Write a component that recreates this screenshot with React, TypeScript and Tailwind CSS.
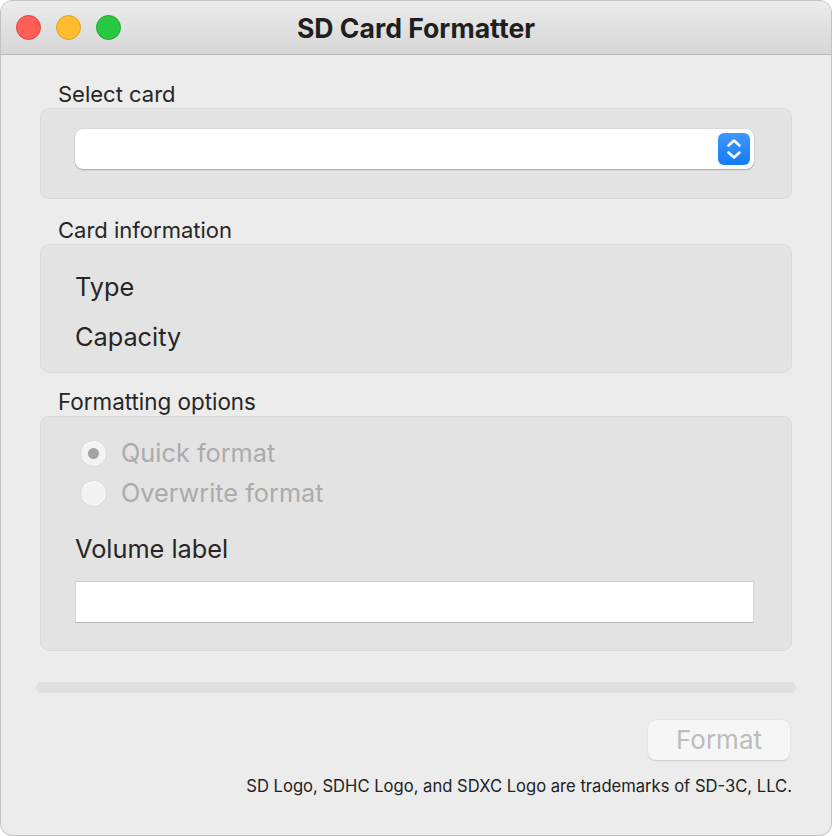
import { useState } from "react";

const font = { fontFamily: "Inter, 'Liberation Sans', sans-serif" };

function TrafficLights() {
  return (
    <div className="flex items-center gap-[15px] pl-[15px]">
      <span className="h-[25px] w-[25px] rounded-full border border-[#e0443e] bg-[#ff5f57]" />
      <span className="h-[25px] w-[25px] rounded-full border border-[#dea123] bg-[#febc2e]" />
      <span className="h-[25px] w-[25px] rounded-full border border-[#1aab29] bg-[#28c840]" />
    </div>
  );
}

function Stepper() {
  return (
    <div className="flex h-[32px] w-[32px] items-center justify-center rounded-[6px] bg-gradient-to-b from-[#3d97ff] to-[#137bf6]">
      <svg width="18" height="24" viewBox="0 0 18 24" fill="none">
        <path d="M3.5 8.5 L9 3.5 L14.5 8.5" stroke="white" strokeWidth="2.6" strokeLinecap="round" strokeLinejoin="round" />
        <path d="M3.5 15.5 L9 20.5 L14.5 15.5" stroke="white" strokeWidth="2.6" strokeLinecap="round" strokeLinejoin="round" />
      </svg>
    </div>
  );
}

function Radio({ checked, label }: { checked?: boolean; label: string }) {
  return (
    <div className="flex h-[40px] items-center">
      <span className="flex h-[27px] w-[27px] items-center justify-center rounded-full border border-[#d9d9d9] bg-[#f3f3f3] shadow-[inset_0_1px_1px_rgba(255,255,255,0.8)]">
        {checked && <span className="h-[11px] w-[11px] rounded-full bg-[#a3a3a3]" />}
      </span>
      <span className="ml-[14px] text-[25.3px] leading-[30px] text-[#ababab]">{label}</span>
    </div>
  );
}

export default function App() {
  const [quick] = useState(true);

  return (
    <div className="h-[836px] w-[832px] bg-white" style={font}>
      <div className="flex h-full flex-col overflow-hidden rounded-[12px] border border-[#c2c2c2] bg-[#ececec] text-[#262626]">
        <div className="grid h-[54px] shrink-0 grid-cols-[1fr_auto_1fr] items-center border-b border-[#b9b9b9] bg-gradient-to-b from-[#ececec] to-[#d6d6d6]">
          <TrafficLights />
          <h1 className="text-[26.6px] font-bold leading-[30px] text-[#1f1f1f]">SD Card Formatter</h1>
          <div />
        </div>

        <div className="flex flex-1 flex-col px-[39px]">
          <p className="mb-[1px] mt-[26px] pl-[18px] text-[22px] leading-[26px]">Select card</p>
          <div className="h-[91px] rounded-[9px] border border-[#dadada] bg-[#e3e3e3] pl-[34px] pr-[37px] pt-[20px]">
            <div className="flex h-[40px] items-center justify-end rounded-[8px] bg-white pr-[4px] shadow-[0_1px_1.5px_rgba(0,0,0,0.25),0_0_0_0.5px_rgba(0,0,0,0.08)]">
              <Stepper />
            </div>
          </div>

          <p className="mb-[1px] mt-[18px] pl-[18px] text-[22px] leading-[26px]">Card information</p>
          <div className="h-[129px] rounded-[9px] border border-[#dadada] bg-[#e3e3e3] pl-[34px] pt-[27px]">
            <p className="text-[25.3px] leading-[30px]">Type</p>
            <p className="mt-[20px] text-[25.3px] leading-[30px]">Capacity</p>
          </div>

          <p className="mb-[1px] mt-[16px] pl-[18px] text-[22.4px] leading-[26px]">Formatting options</p>
          <div className="h-[235px] rounded-[9px] border border-[#dadada] bg-[#e3e3e3] pl-[39px] pr-[37px] pt-[16px]">
            <Radio checked={quick} label="Quick format" />
            <Radio label="Overwrite format" />
            <p className="-ml-[5px] mt-[21px] text-[25.3px] leading-[30px]">Volume label</p>
            <div className="-ml-[5px] mt-[17px] h-[42px] border-b-[1.5px] border-l border-r border-t border-b-[#b8b8b8] border-l-[#d6d6d6] border-r-[#d6d6d6] border-t-[#cdcdcd] bg-white" />
          </div>

          <div className="-mx-[4px] mt-[31px] h-[11px] rounded-full bg-[#dfdfdf]" />

          <div className="mt-[27px] flex justify-end pr-[2px]">
            <button
              disabled
              className="flex h-[40px] w-[142px] items-center justify-center rounded-[8px] bg-[#f6f6f6] text-[26px] leading-[30px] text-[#bcbcbc] shadow-[0_0.5px_1.5px_rgba(0,0,0,0.15)]"
            >
              Format
            </button>
          </div>

          <p className="mt-[14px] text-right text-[16.6px] leading-[24px] text-[#222]">
            SD Logo, SDHC Logo, and SDXC Logo are trademarks of SD-3C, LLC.
          </p>
        </div>
      </div>
    </div>
  );
}
